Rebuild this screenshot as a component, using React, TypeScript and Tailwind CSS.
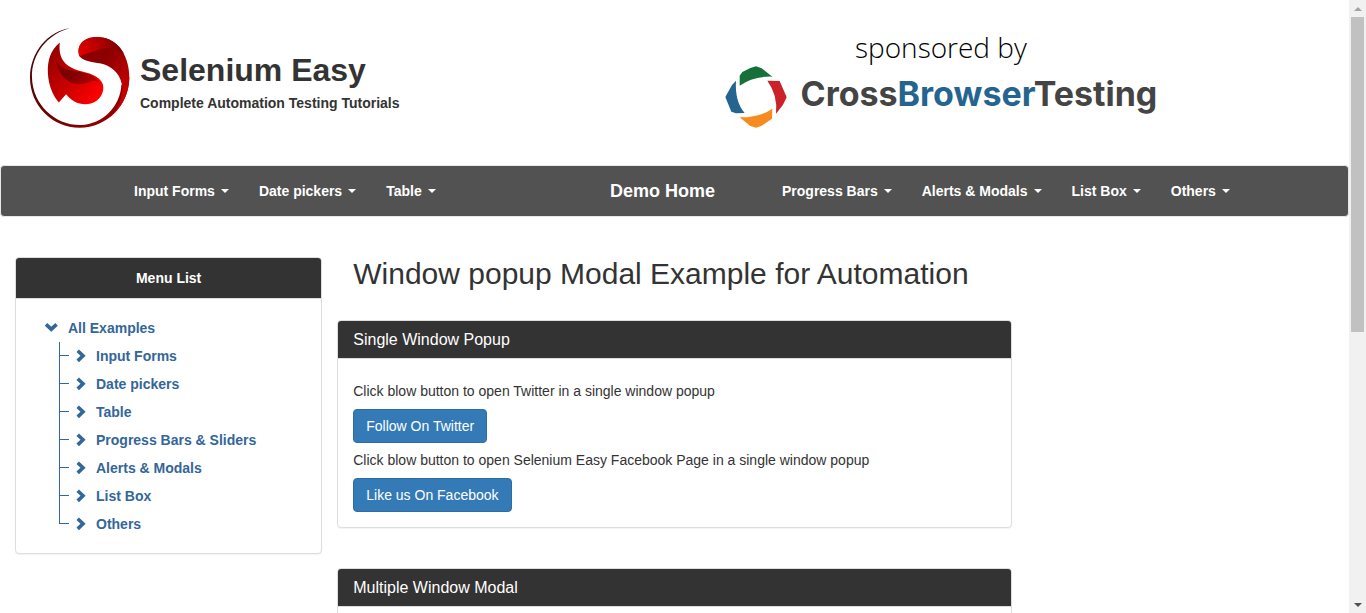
import React from "react";

const leftMenus = ["Input Forms", "Date pickers", "Table"];
const rightMenus = ["Progress Bars", "Alerts & Modals", "List Box", "Others"];
const treeItems = [
  "Input Forms",
  "Date pickers",
  "Table",
  "Progress Bars & Sliders",
  "Alerts & Modals",
  "List Box",
  "Others",
];

function SeleniumLogo() {
  return (
    <svg viewBox="30 24 302 302" className="size-[100px] shrink-0" aria-hidden="true">
      <defs>
        <linearGradient id="ring" x1="0" y1="0" x2="1" y2="1">
          <stop offset="0" stopColor="#3a0808" />
          <stop offset="0.5" stopColor="#6d0000" />
          <stop offset="0.8" stopColor="#8c0000" />
          <stop offset="1" stopColor="#c00000" />
        </linearGradient>
        <linearGradient id="head" x1="0" y1="0" x2="0.9" y2="1">
          <stop offset="0" stopColor="#900000" />
          <stop offset="0.4" stopColor="#8a0000" />
          <stop offset="1" stopColor="#d80000" />
        </linearGradient>
        <linearGradient id="headTop" x1="0" y1="0.6" x2="1" y2="0.4">
          <stop offset="0" stopColor="#e00000" />
          <stop offset="0.5" stopColor="#b00000" />
          <stop offset="1" stopColor="#700000" />
        </linearGradient>
        <linearGradient id="tail" x1="0" y1="0" x2="1" y2="0.8">
          <stop offset="0" stopColor="#8a0000" />
          <stop offset="0.5" stopColor="#c40000" />
          <stop offset="1" stopColor="#ff0000" />
        </linearGradient>
        <linearGradient id="tailTop" x1="0" y1="0" x2="1" y2="0.7">
          <stop offset="0" stopColor="#8a0000" />
          <stop offset="0.5" stopColor="#7a0000" />
          <stop offset="1" stopColor="#b00000" />
        </linearGradient>
      </defs>
      <path
        d="M150 25C84 34 30 98 30 174C30 257 97 325 180 325C263 325 330 257 330 172L306 196C302 262 250 314 184 317C104 318 38 254 36 174C34 102 84 42 150 25Z"
        fill="url(#ring)"
      />
      <path
        d="M180 110C166 74 198 47 242 52C298 57 331 112 330 176C328 222 312 254 284 282C302 256 312 222 307 192C300 158 274 138 244 131C218 126 194 126 180 110Z"
        fill="url(#head)"
      />
      <path
        d="M180 110C166 74 198 47 242 52C272 54 298 72 314 102C284 80 254 82 236 90C214 100 198 100 180 110Z"
        fill="url(#headTop)"
      />
      <path
        d="M120 68C92 90 82 124 84 160C86 198 98 226 117 249L139 224C156 246 184 260 214 252C242 244 256 218 250 194C240 166 206 160 176 152C142 142 114 122 120 68Z"
        fill="url(#tail)"
      />
      <path
        d="M106 118C118 146 142 152 176 156C206 162 230 170 236 186C216 180 206 192 182 194C146 196 116 164 106 118Z"
        fill="url(#tailTop)"
      />
    </svg>
  );
}

function CrossBrowserLogo() {
  return (
    <svg viewBox="31 108 186 186" className="size-[62px] shrink-0" aria-hidden="true">
      <path d="M75 137L83 126L107 114L124 109L141 115L173 140Q116 138 75 167Z" fill="#17703a" />
      <path d="M158 152L195 153L205 176L216 202L205 224L184 251Q190 196 158 152Z" fill="#cb2229" />
      <path d="M173 236L172 266L141 287L124 293L107 288L75 262Q134 263 173 236Z" fill="#f68b1f" />
      <path d="M64 152L52 165L32 201L50 245L64 250L90 249Q60 214 64 152Z" fill="#24648f" />
    </svg>
  );
}

function Chevron({ down = false }: { down?: boolean }) {
  return (
    <svg
      viewBox="0 0 14 14"
      className="size-[14px] shrink-0"
      fill="none"
      stroke="#336699"
      strokeWidth="3.6"
      aria-hidden="true"
    >
      {down ? <path d="M2 3.4L7.3 8.2L12.6 3.4" /> : <path d="M2.7 1.7L8 6.8L2.7 11.9" />}
    </svg>
  );
}

function NavMenu({ items }: { items: string[] }) {
  return (
    <ul className="flex">
      {items.map((item) => (
        <li key={item}>
          <a
            href="#"
            className="flex items-center gap-[6px] px-[15px] py-[15px] text-[14px] leading-5 font-bold whitespace-nowrap text-white"
          >
            {item}
            <span className="border-x-4 border-t-4 border-x-transparent border-t-white" />
          </a>
        </li>
      ))}
    </ul>
  );
}

function Panel({ title, children }: { title: string; children?: React.ReactNode }) {
  return (
    <section className="mb-10 rounded-[4px] border border-[#dddddd] bg-white shadow-[0_1px_1px_rgba(0,0,0,0.05)]">
      <h3 className="rounded-t-[3px] border-b border-[#dddddd] bg-[#333333] px-[15px] py-[9px] text-[16px] leading-[19px] text-white">
        {title}
      </h3>
      <div className="px-[15px] pt-[22px] pb-[15px]">{children}</div>
    </section>
  );
}

function PrimaryButton({ children }: { children: React.ReactNode }) {
  return (
    <button
      type="button"
      className="rounded-[4px] border border-[#2e6da4] bg-[#337ab7] px-3 py-[6px] text-[14px] leading-5 text-white"
    >
      {children}
    </button>
  );
}

function Scrollbar() {
  return (
    <div className="flex w-[17px] shrink-0 flex-col items-center bg-[#f1f1f1]" aria-hidden="true">
      <div className="flex h-[17px] items-center">
        <span className="border-x-4 border-b-4 border-x-transparent border-b-[#a3a3a3]" />
      </div>
      <div className="flex w-[13px] flex-1 flex-col">
        <div className="h-[54.4%] bg-[#c1c1c1]" />
      </div>
      <div className="flex h-[17px] items-center">
        <span className="border-x-4 border-t-4 border-x-transparent border-t-[#505050]" />
      </div>
    </div>
  );
}

export default function App() {
  return (
    <div className="flex h-screen overflow-hidden bg-white font-['Liberation_Sans',Arial,sans-serif] text-[14px] leading-5 text-[#333333]">
      <div className="min-w-0 flex-1 overflow-hidden">
        <header className="grid grid-cols-2 pt-7 pb-[37px]">
          <a href="#" className="flex items-start gap-[10px] pl-[30px]">
            <SeleniumLogo />
            <div className="pt-6">
              <h1 className="text-[32px] leading-9 font-bold">Selenium Easy</h1>
              <p className="mt-[5px] text-[14px] leading-5 font-bold">
                Complete Automation Testing Tutorials
              </p>
            </div>
          </a>
          <div className="pl-[50px]">
            <a href="#" className="inline-flex flex-col items-center">
              <span className="font-['Open_Sans',sans-serif] text-[28px] leading-[38px] font-light text-black">
                sponsored by
              </span>
              <span className="flex items-start gap-[14px]">
                <CrossBrowserLogo />
                <span className="font-['Inter',sans-serif] text-[34px] leading-[56px] font-bold whitespace-nowrap text-[#444444]">
                  Cross<span className="text-[#24648f]">Browser</span>Testing
                </span>
              </span>
            </a>
          </div>
        </header>

        <nav className="grid grid-cols-[594fr_172fr_581fr] rounded-[4px] border border-[#e7e7e7] bg-[#525252]">
          <div className="pl-[118px]">
            <NavMenu items={leftMenus} />
          </div>
          <a
            href="#"
            className="px-[15px] py-[15px] text-[18px] leading-5 font-bold whitespace-nowrap text-white"
          >
            Demo Home
          </a>
          <NavMenu items={rightMenus} />
        </nav>

        <div className="grid grid-cols-4 pt-10">
          <aside className="px-[15px]">
            <div className="rounded-[4px] border border-[#dddddd] bg-white shadow-[0_1px_1px_rgba(0,0,0,0.05)]">
              <h2 className="rounded-t-[3px] border-b border-[#dddddd] bg-[#333333] py-[10px] text-center text-[14px] leading-5 font-bold text-white">
                Menu List
              </h2>
              <div className="px-7 pt-[15px] pb-[15px] font-bold text-[#336699]">
                <a href="#" className="flex h-7 items-center gap-[10px]">
                  <Chevron down />
                  All Examples
                </a>
                <ul className="ml-[15px]">
                  {treeItems.map((item, index) => (
                    <li key={item} className="flex">
                      <span className="flex w-[10px] flex-col">
                        <span className="h-[14px] border-b border-l border-[#336699]" />
                        <span
                          className={
                            index < treeItems.length - 1
                              ? "flex-1 border-l border-[#336699]"
                              : "flex-1"
                          }
                        />
                      </span>
                      <a href="#" className="flex h-7 items-center gap-[7px] pl-[6px]">
                        <Chevron />
                        {item}
                      </a>
                    </li>
                  ))}
                </ul>
              </div>
            </div>
          </aside>

          <main className="col-span-2">
            <h2 className="mb-[30px] px-4 text-[30px] leading-[33px]">
              Window popup Modal Example for Automation
            </h2>
            <Panel title="Single Window Popup">
              <p className="mb-2">Click blow button to open Twitter in a single window popup</p>
              <PrimaryButton>Follow On Twitter</PrimaryButton>
              <p className="mt-[7px] mb-2">
                Click blow button to open Selenium Easy Facebook Page in a single window popup
              </p>
              <PrimaryButton>Like us On Facebook</PrimaryButton>
            </Panel>
            <Panel title="Multiple Window Modal" />
          </main>
        </div>
      </div>
      <Scrollbar />
    </div>
  );
}
